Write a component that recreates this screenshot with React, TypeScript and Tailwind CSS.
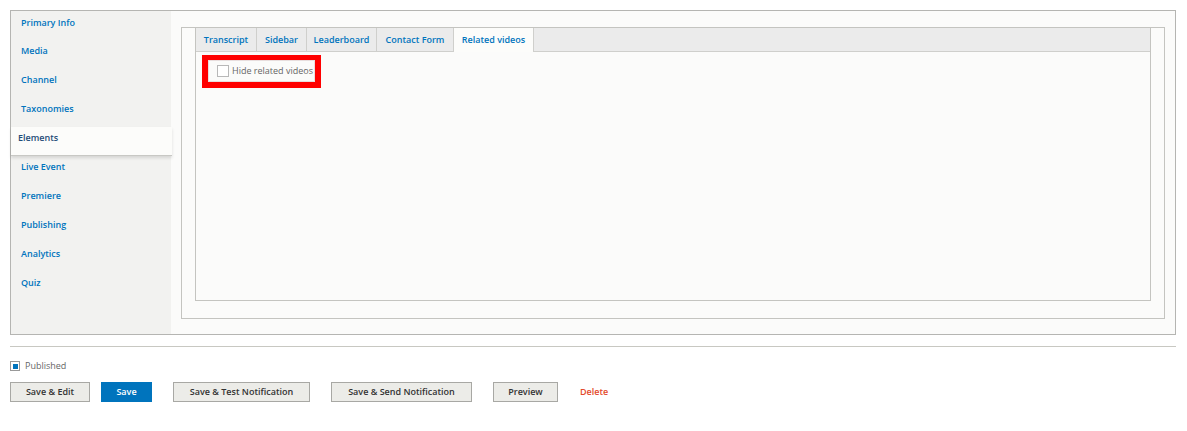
import React from "react";

const navItems = [
  "Primary Info",
  "Media",
  "Channel",
  "Taxonomies",
  "Elements",
  "Live Event",
  "Premiere",
  "Publishing",
  "Analytics",
  "Quiz",
];

const tabs = [
  { label: "Transcript", w: "w-[61px]" },
  { label: "Sidebar", w: "w-[50px]" },
  { label: "Leaderboard", w: "w-[70px]" },
  { label: "Contact Form", w: "w-[77px]" },
  { label: "Related videos", w: "w-[80px]" },
];

export default function App() {
  const btn =
    "h-[20px] border border-[#a8a8a4] bg-[#ecece8] text-[#333] text-[9px] font-semibold flex items-center justify-center whitespace-nowrap";

  return (
    <div className="w-[1187px] h-[431px] bg-white font-['Open_Sans',sans-serif] px-[10px] pt-[10px]">
      <div className="flex w-[1166px] h-[325px] border border-[#b5b5b2]">
        {/* vertical tabs */}
        <ul className="w-[160px] bg-[#f2f2f0] shrink-0">
          {navItems.map((item) =>
            item === "Elements" ? (
              <li
                key={item}
                className="relative h-[29px] w-[161px] bg-[#fcfcfa] pl-[7px] pt-[5px] text-[9px] leading-[12px] font-semibold text-[#1f4d78] border-b border-[#c8c8c4] shadow-[0_2px_3px_rgba(0,0,0,0.12)] z-10"
              >
                {item}
              </li>
            ) : (
              <li
                key={item}
                className="h-[28.9px] pl-[10px] pt-[5.5px] text-[9px] leading-[12px] font-semibold text-[#0074bd]"
              >
                {item}
              </li>
            )
          )}
        </ul>

        {/* content */}
        <div className="flex-1 flex bg-[#fbfbfa] pt-[16px] px-[10px] pb-[15px]">
          <div className="flex-1 flex border border-[#c4c4c0] px-[13px] pb-[17px]">
            <div className="flex-1 flex flex-col border-x border-b border-[#c4c4c0]">
              <div className="flex h-[24px] bg-[#ebebeb] border-b border-[#cfcfcc]">
                {tabs.map((t) => (
                  <div
                    key={t.label}
                    className={`${t.w} h-[24px] border-r border-[#cfcfcc] flex items-center justify-center text-[9px] font-semibold text-[#0074bd] whitespace-nowrap ${
                      t.label === "Related videos" ? "bg-[#fcfcfa]" : ""
                    }`}
                  >
                    {t.label}
                  </div>
                ))}
              </div>
              <div className="pt-[3px] pl-[6px]">
                <div className="w-[119px] h-[33px] border-[6px] border-t-[5px] border-[#ff0000]">
                  <div className="h-full border border-[#e8dede] bg-[#fbfbfa] flex items-center pl-[8px] gap-[3px]">
                    <span className="w-[12px] h-[12px] shrink-0 border border-[#b8b8b8] bg-white" />
                    <span className="text-[9px] text-[#666] whitespace-nowrap">Hide related videos</span>
                  </div>
                </div>
              </div>
            </div>
          </div>
        </div>
      </div>

      <div className="mt-[11px] h-px w-[1166px] bg-[#c8c8c2]" />

      <div className="mt-[14px] h-[10px] flex items-center gap-[5px]">
        <span className="w-[10px] h-[10px] border border-[#999] bg-white flex items-center justify-center">
          <span className="w-[5px] h-[5px] bg-[#0074bd]" />
        </span>
        <span className="text-[9px] leading-[10px] text-[#666]">Published</span>
      </div>

      <div className="mt-[11px] flex items-center">
        <button className={`${btn} w-[80px]`}>Save &amp; Edit</button>
        <button className="ml-[11px] w-[51px] h-[20px] bg-[#0074bd] text-white text-[9px] font-semibold flex items-center justify-center">
          Save
        </button>
        <button className={`${btn} ml-[21px] w-[137px]`}>Save &amp; Test Notification</button>
        <button className={`${btn} ml-[21px] w-[141px]`}>Save &amp; Send Notification</button>
        <button className={`${btn} ml-[21px] w-[65px]`}>Preview</button>
        <span className="ml-[22px] text-[9px] font-semibold text-[#e34a2c]">Delete</span>
      </div>
    </div>
  );
}
